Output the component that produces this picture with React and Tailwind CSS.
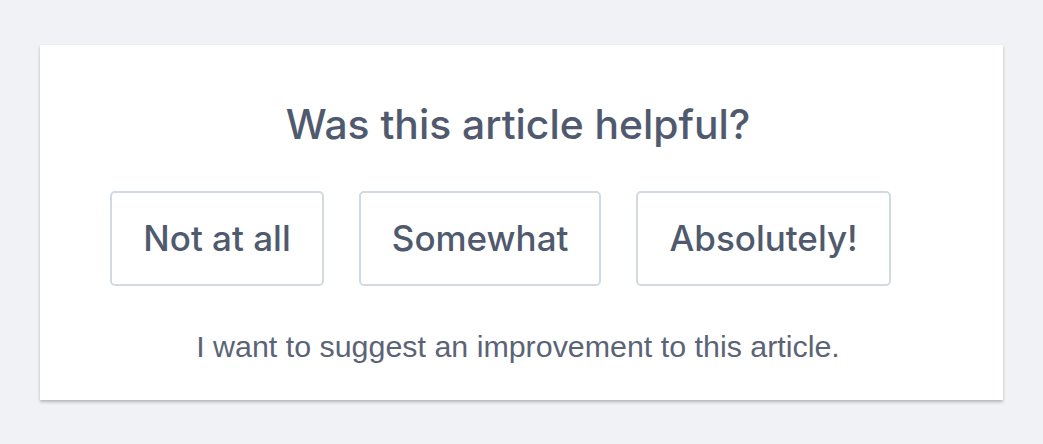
export default function App() {
  const opts = ["Not at all", "Somewhat", "Absolutely!"];
  return (
    <div className="min-h-[444px] bg-[#f0f2f6] px-[40px] pt-[45px]">
      <div className="flex w-[963px] flex-col items-center bg-white pt-[55px] pr-[7px] pb-[36px] shadow-[0_2px_3px_rgba(0,0,0,0.25)]">
        <h2 className="font-['Inter',sans-serif] text-[40.8px] font-medium leading-[48px] text-[#505a6e]">Was this article helpful?</h2>
        <div className="mt-[43px] flex">
          {opts.map((o) => (
            <button
              key={o}
              className="mr-[35px] h-[95px] rounded-[5px] border-2 border-[#d3d9e3] bg-white px-[31px] font-['Inter',sans-serif] text-[35px] font-medium text-[#505a6e]"
            >
              {o}
            </button>
          ))}
        </div>
        <p className="mt-[42px] font-['Liberation_Sans',Arial,sans-serif] text-[30.4px] leading-[36px] text-[#5b6477]">
          I want to suggest an improvement to this article.
        </p>
      </div>
    </div>
  );
}
